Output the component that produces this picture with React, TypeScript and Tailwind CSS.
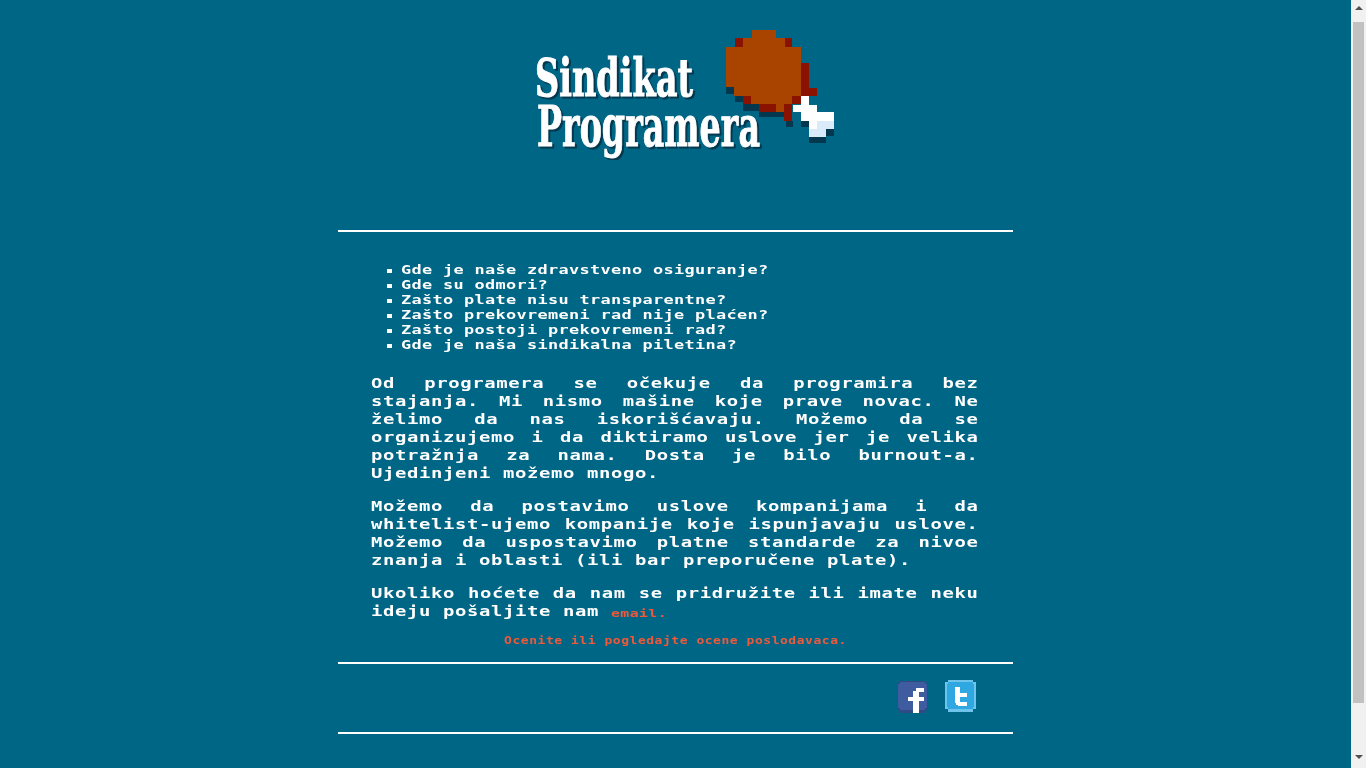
const mono = "font-['DejaVu_Sans_Mono',monospace]"

const questions = [
    "Gde je naše zdravstveno osiguranje?",
    "Gde su odmori?",
    "Zašto plate nisu transparentne?",
    "Zašto prekovremeni rad nije plaćen?",
    "Zašto postoji prekovremeni rad?",
    "Gde je naša sindikalna piletina?",
]

// coordinates are in 3x units, taken from the logo at 3x
function Logo() {
    return (
        <svg width="330" height="140" viewBox="0 0 990 420" className="block">
            <g shapeRendering="crispEdges">
                <g fill="#04384f">
                    <rect x="618" y="186" width="25" height="36" />
                    <rect x="645" y="228" width="25" height="19" />
                    <rect x="670" y="253" width="48" height="19" />
                    <rect x="718" y="277" width="74" height="15" />
                    <rect x="797" y="303" width="23" height="17" />
                    <rect x="843" y="303" width="24" height="17" />
                    <rect x="868" y="352" width="49" height="18" />
                    <rect x="917" y="327" width="25" height="20" />
                </g>
                <path d="M695 30H768V55H795V80H843V228H817V253H792V277H768V253H693V228H643V201H618V80H670V55H695Z" fill="#a84300" />
                <g fill="#8a1200">
                    <rect x="645" y="55" width="25" height="25" />
                    <rect x="795" y="55" width="22" height="25" />
                    <rect x="843" y="130" width="25" height="75" />
                    <rect x="843" y="205" width="49" height="23" />
                    <rect x="817" y="228" width="26" height="25" />
                    <rect x="669" y="228" width="24" height="25" />
                    <rect x="718" y="253" width="50" height="24" />
                    <rect x="792" y="253" width="25" height="49" />
                </g>
                <path d="M843 228H867V255H892V277H942V327H917V352H868V303H843V277H818V255H843Z" fill="#ffffff" />
                <path d="M892 327V303H942V327H917V352H868V327Z" fill="#d9ebfb" />
            </g>
            <g
                fontFamily="'DejaVu Serif',serif"
                fontWeight="700"
                fill="#ffffff"
                stroke="#ffffff"
                strokeWidth="3"
                className="drop-shadow-[6px_6px_0_#04384f]"
            >
                <text x="45" y="228" fontSize="156" textLength="474" lengthAdjust="spacingAndGlyphs">Sindikat</text>
                <text x="51" y="378" fontSize="166" textLength="669" lengthAdjust="spacingAndGlyphs">Programera</text>
            </g>
        </svg>
    )
}

function Facebook() {
    return (
        <svg width="32" height="32" viewBox="0 0 32 32" shapeRendering="crispEdges" className="block">
            <path d="M3 0H28V2H31V29H28V32H3V29H0V2H3Z" fill="#2f4a84" />
            <path d="M3 1H28V3H30V27H28V29H3V27H1V3H3Z" fill="#3f5ca0" />
            <path d="M19 7H27V11H22V16H27V20H22V32H16V20H11V16H16V10H19Z" fill="#ffffff" />
        </svg>
    )
}

function Twitter() {
    return (
        <svg width="32" height="32" viewBox="0 0 32 32" shapeRendering="crispEdges" className="block">
            <path d="M3 0H28V2H31V29H28V32H3V29H0V2H3Z" fill="#6fc4ec" />
            <path d="M3 2H28V4H29V27H28V29H3V27H2V4H3Z" fill="#2fa8e2" />
            <path d="M10 7H15V13H22V17H15V22H22V26H13V25H11V23H10Z" fill="#ffffff" />
        </svg>
    )
}

function Scrollbar() {
    return (
        <div className="flex h-screen w-[15px] shrink-0 flex-col items-center bg-[#f1f1f1]">
            <div className="mt-[6px] h-0 w-0 border-x-[4px] border-b-[4px] border-x-transparent border-b-[#505050]" />
            <div className="mt-[12px] h-[681px] w-[11px] bg-[#c1c1c1]" />
            <div className="mt-[52px] h-0 w-0 border-x-[4px] border-t-[4px] border-x-transparent border-t-[#505050]" />
        </div>
    )
}

export default function App() {
    return (
        <div className={`flex h-screen overflow-hidden bg-[#006685] text-white ${mono}`}>
            <main className="flex-1">
                <div className="mx-auto w-[675px]">
                    <header className="flex h-[230px] justify-center pt-[20px]">
                        <div className="ml-[19px]"><Logo /></div>
                    </header>

                    <div className="border-t-2 border-white px-[33px]">
                        <ul className="mt-[30px] pl-[16px] text-[13px] leading-[15px] font-bold">
                            {questions.map(question => (
                                <li key={question} className="flex">
                                    <span className="mt-[7px] mr-[9px] h-[4px] w-[5px] shrink-0 bg-white" />
                                    <span className="origin-left scale-x-[1.3] tracking-[0.25px] whitespace-nowrap">{question}</span>
                                </li>
                            ))}
                        </ul>

                        <div className="mt-[22px] w-[450px] origin-left scale-x-[1.35] text-justify text-[14px] leading-[18px] font-bold tracking-[0.46px]">
                            <p>
                                Od programera se očekuje da programira bez stajanja. Mi nismo mašine koje prave novac. Ne
                                želimo da nas iskorišćavaju. Možemo da se organizujemo i da diktiramo uslove jer je velika
                                potražnja za nama. Dosta je bilo burnout-a. Ujedinjeni možemo mnogo.
                            </p>
                            <p className="mt-[15px]">
                                Možemo da postavimo uslove kompanijama i da whitelist-ujemo kompanije koje ispunjavaju uslove.
                                Možemo da uspostavimo platne standarde za nivoe znanja i oblasti (ili bar preporučene plate).
                            </p>
                            <p className="mt-[15px]">
                                Ukoliko hoćete da nam se pridružite ili imate neku ideju pošaljite nam{" "}
                                <a className="relative top-[1px] text-[11px] tracking-[0.29px] text-[#f0583a]">email.</a>
                            </p>
                        </div>

                        <p className="mt-[13px] h-[27px] scale-x-[1.3] text-center text-[10px] leading-[12px] font-bold tracking-[0.41px] text-[#f0583a]">
                            Ocenite ili pogledajte ocene poslodavaca.
                        </p>
                    </div>

                    <div className="box-content flex h-[68px] items-start justify-end gap-[16px] border-y-2 border-white pr-[36px]">
                        <div className="mt-[17px]"><Facebook /></div>
                        <div className="mt-[16px]"><Twitter /></div>
                    </div>
                </div>
            </main>
            <Scrollbar />
        </div>
    )
}
